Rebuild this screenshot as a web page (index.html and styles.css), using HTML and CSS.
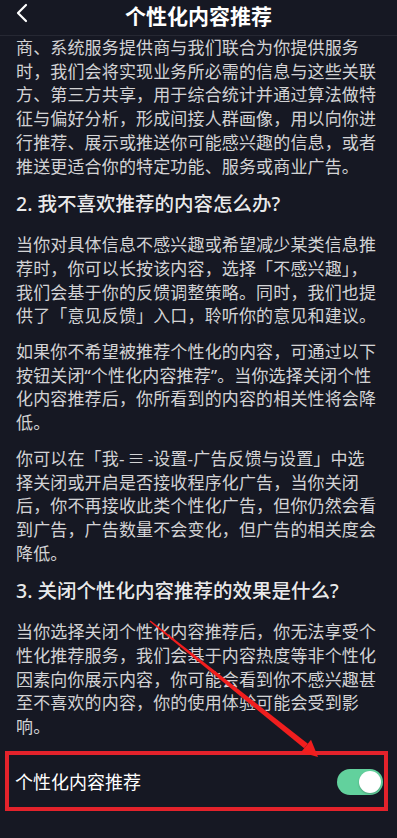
FILE: index.html
```html
<!DOCTYPE html>
<html lang="zh-CN">
<head>
  <meta charset="UTF-8">
  <meta name="viewport" content="width=device-width, initial-scale=1.0">
  <title>个性化内容推荐</title>
  <link rel="stylesheet" href="styles.css">
</head>
<body>

<div class="page">
  <header class="topbar">
    <svg class="back" width="14" height="22" viewBox="0 0 14 22">
      <polyline points="11,3 3,11 11,19" fill="none" stroke="#fff" stroke-width="2.2" stroke-linecap="round" stroke-linejoin="round"/>
    </svg>
    <h1 class="title">个性化内容推荐</h1>
  </header>

  <div class="content">
    <p>商、系统服务提供商与我们联合为你提供服务时，我们会将实现业务所必需的信息与这些关联方、第三方共享，用于综合统计并通过算法做特征与偏好分析，形成间接人群画像，用以向你进行推荐、展示或推送你可能感兴趣的信息，或者推送更适合你的特定功能、服务或商业广告。</p>

    <h2>2. 我不喜欢推荐的内容怎么办?</h2>
    <p>当你对具体信息不感兴趣或希望减少某类信息推荐时，你可以长按该内容，选择「不感兴趣」，我们会基于你的反馈调整策略。同时，我们也提供了「意见反馈」入口，聆听你的意见和建议。</p>
    <p>如果你不希望被推荐个性化的内容，可通过以下按钮关闭“个性化内容推荐”。当你选择关闭个性化内容推荐后，你所看到的内容的相关性将会降低。</p>
    <p>你可以在「我-<span class="menu-glyph">≡</span>-设置-广告反馈与设置」中选择关闭或开启是否接收程序化广告，当你关闭后，你不再接收此类个性化广告，但你仍然会看到广告，广告数量不会变化，但广告的相关度会降低。</p>

    <h2>3. 关闭个性化内容推荐的效果是什么?</h2>
    <p>当你选择关闭个性化内容推荐后，你无法享受个性化推荐服务，我们会基于内容热度等非个性化因素向你展示内容，你可能会看到你不感兴趣甚至不喜欢的内容，你的使用体验可能会受到影响。</p>
  </div>

  <div class="setting">
    <span class="setting-label">个性化内容推荐</span>
    <span class="switch on"><span class="knob"></span></span>
  </div>

  <!-- 标注箭头 -->
  <svg class="arrow" width="397" height="838" viewBox="0 0 397 838">
    <polygon points="149.5,621.6 150.5,620.4 307.9,743.7 304.1,748.3" fill="#f01e1e"/>
    <polygon points="311,739.8 318,757 301,752.2" fill="#f01e1e"/>
  </svg>
</div>

</body>
</html>
```

FILE: styles.css
```css
html, body {
  margin: 0;
  padding: 0;
  background-color: #161823;
}
body {
  font-family: "Noto Sans", "Noto Sans CJK SC", sans-serif;
  color: rgba(255, 255, 255, 0.82);
}
.page {
  position: relative;
  width: 397px;
  height: 838px;
  overflow: hidden;
}
.topbar {
  height: 35px;
  display: flex;
  align-items: center;
  justify-content: center;
  position: relative;
  border-bottom: 1px solid #262833;
}
.back {
  position: absolute;
  left: 15px;
  top: 2px;
}
.title {
  margin: 0;
  font-size: 21px;
  font-weight: bold;
  color: #fff;
  line-height: 30px;
  margin-top: -3px;
}
.content {
  padding: 0 16px;
}
.content p {
  margin: 0 0 12px;
  font-size: 17px;
  letter-spacing: 0.15px;
  line-height: 23.7px;
}
.menu-glyph {
  margin: 0 3px;
}
.content h2 {
  margin: 0 0 15px;
  font-size: 19.5px;
  font-weight: 500;
  line-height: 28px;
  color: rgba(255, 255, 255, 0.92);
}
.setting {
  display: flex;
  justify-content: space-between;
  align-items: center;
  margin: 10px 9px 0 5px;
  height: 52px;
  padding: 0 1px 0 6px;
  border: 4.5px solid #e3222b;
}
.setting-label {
  font-size: 18px;
  color: #fff;
}
.switch {
  width: 46px;
  height: 26px;
  border-radius: 13px;
  background-color: #3a3c46;
  position: relative;
  margin-top: 2px;
}
.switch.on {
  background-color: #62d19d;
}
.knob {
  position: absolute;
  top: 2px;
  right: 2px;
  width: 22px;
  height: 22px;
  border-radius: 50%;
  background-color: #fff;
  box-shadow: 0 1px 2px rgba(0, 0, 0, 0.25);
}
.arrow {
  position: absolute;
  left: 0;
  top: 0;
  pointer-events: none;
}
```
